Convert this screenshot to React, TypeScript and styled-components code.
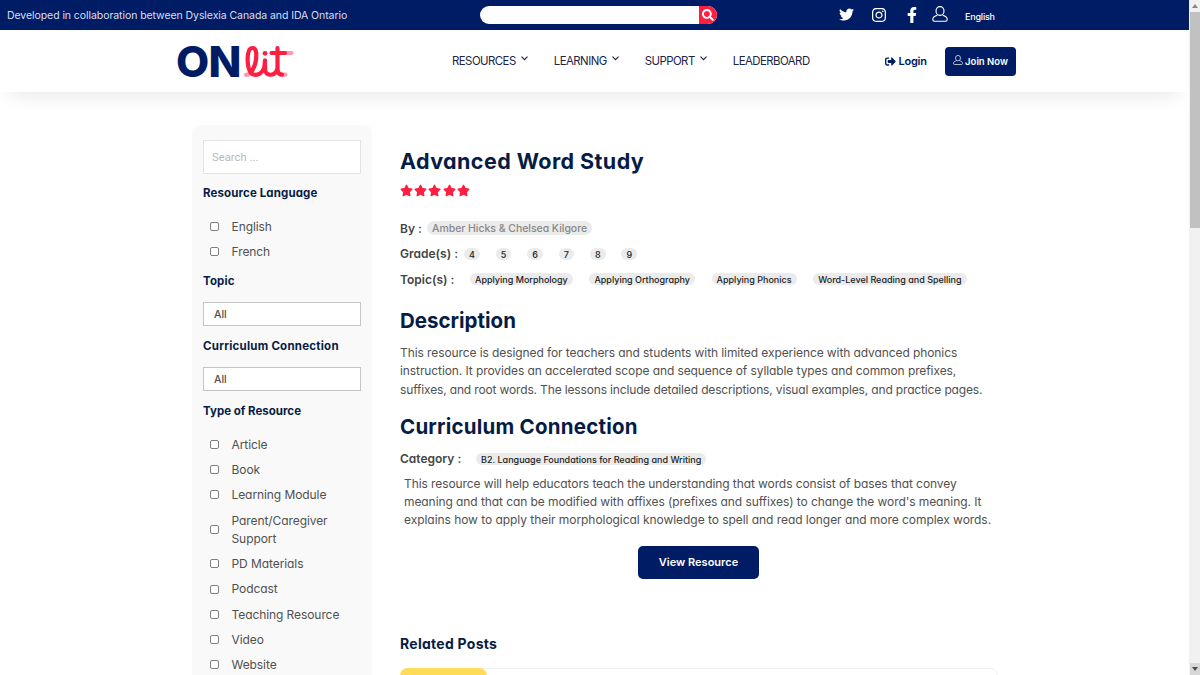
import React from 'react';
import styled, { createGlobalStyle, css } from 'styled-components';
import { FaTwitter, FaInstagram, FaFacebookF, FaSearch, FaStar, FaSignOutAlt } from 'react-icons/fa';

const navy = '#001c64';
const ink = '#061c45';
const red = '#fd1f42';

const GlobalStyle = createGlobalStyle`
  *, *::before, *::after { box-sizing: border-box; }
  html, body { margin: 0; padding: 0; }
  body {
    background: #fff;
    color: #505050;
    font-family: Inter, 'Open Sans', sans-serif;
    font-feature-settings: 'cv11' 1;
    overflow: hidden;
  }
  h1, h2, h3, p, ul { margin: 0; padding: 0; }
  ul { list-style: none; }
`;

const Frame = styled.div`
  display: flex;
  width: 1200px;
  height: 675px;
  overflow: hidden;
`;

const Page = styled.div`
  width: 1189px;
  height: 675px;
  overflow: hidden;
  display: flex;
  flex-direction: column;
`;

const TopBar = styled.div`
  flex: none;
  height: 30px;
  display: flex;
  align-items: center;
  background: ${navy};
  color: #d9dff0;
`;

const Tagline = styled.div`
  width: 480px;
  padding-left: 7px;
  font-size: 10.5px;
  letter-spacing: -0.07px;
  white-space: nowrap;
  font-feature-settings: normal;
`;

const SearchPill = styled.div`
  display: flex;
  width: 237px;
  height: 18px;
  border-radius: 9px;
  background: #fff;
  overflow: hidden;
  justify-content: flex-end;
`;

const SearchGo = styled.div`
  width: 18px;
  display: grid;
  place-items: center;
  background: ${red};
  color: #fff;
`;

const Social = styled.div`
  display: flex;
  align-items: center;
  margin-left: 122px;
  color: #fff;
  svg { display: block; }
`;

const IconSlot = styled.span<{ $gap?: number; $lift?: number }>`
  margin: ${(p) => -(p.$lift ?? 1)}px 0 0 ${(p) => p.$gap ?? 0}px;
`;

const Lang = styled.span`
  margin: 2px 0 0 17.5px;
  font-size: 9px;
  font-weight: 500;
  letter-spacing: -0.2px;
`;

const Header = styled.header`
  flex: none;
  height: 62px;
  display: flex;
  align-items: center;
  padding-left: 177px;
  background: #fff;
  box-shadow: 0 14px 18px -10px rgba(0, 0, 0, 0.09);
`;

const Logo = styled.div`
  display: flex;
  align-items: center;
  width: 275px;
  height: 36px;
  color: ${navy};
`;

const LogoOn = styled.span`
  flex: none;
  width: 66px;
  margin-left: -1px;
  font-size: 43px;
  font-weight: 800;
  line-height: 36px;
  letter-spacing: -0.7px;
`;

const Nav = styled.nav`
  display: flex;
  width: 433px;
  gap: 26px;
  color: #1c2444;
`;

const NavItem = styled.a`
  display: flex;
  align-items: center;
  gap: 5px;
  font-size: 11.4px;
  line-height: 18px;
  letter-spacing: -0.53px;
  white-space: nowrap;
  svg { margin-top: -5px; }
`;

const Login = styled.a`
  display: flex;
  align-items: center;
  gap: 2.5px;
  width: 60px;
  color: ${navy};
  font-size: 11px;
  font-weight: 600;
  letter-spacing: -0.25px;
`;

const buttonBase = css`
  display: flex;
  align-items: center;
  justify-content: center;
  background: ${navy};
  color: #fff;
  font-weight: 600;
  white-space: nowrap;
`;

const Join = styled.a`
  ${buttonBase}
  gap: 2px;
  width: 71px;
  height: 29px;
  border-radius: 4px;
  font-size: 9.5px;
  svg { margin-top: -2px; }
`;

const Columns = styled.div`
  display: flex;
  gap: 28px;
  padding: 33px 0 0 192px;
  align-items: flex-start;
`;

const Sidebar = styled.aside`
  width: 180px;
  height: 620px;
  padding: 15px 11px;
  background: #f9f9f9;
  border-radius: 8px;
`;

const SideSearch = styled.div`
  width: 158px;
  height: 34px;
  padding-left: 8px;
  border: 1px solid #e3e3e3;
  background: #fff;
  color: #b8b8b8;
  font: 11.3px/33px Roboto, sans-serif;
`;

const SideTitle = styled.h3<{ $top: number; $ls?: number }>`
  margin-top: ${(p) => p.$top}px;
  color: ${ink};
  font-size: 11.5px;
  font-weight: 650;
  line-height: 18px;
  letter-spacing: ${(p) => p.$ls ?? 0}px;
  white-space: nowrap;
`;

const Options = styled.ul<{ $top: number }>`
  display: flex;
  flex-direction: column;
  gap: 7px;
  margin-top: ${(p) => p.$top}px;
`;

const Option = styled.li`
  display: flex;
  align-items: center;
  gap: 12.5px;
  padding-left: 7px;
  font-size: 12px;
  line-height: 18.3px;
  letter-spacing: -0.08px;
`;

const OptionText = styled.span`
  padding-top: 0.6px;
  margin-bottom: -0.6px;
`;

const Box = styled.span`
  flex: none;
  width: 9px;
  height: 9px;
  border: 1px solid #808080;
  border-radius: 2px;
  background: #fff;
`;

const Select = styled.div`
  width: 158px;
  height: 24px;
  margin-top: 12px;
  padding-left: 10px;
  border: 1px solid #c4c4c4;
  background: #fff;
  font-size: 10.5px;
  font-weight: 500;
  line-height: 23px;
`;

const Main = styled.main`
  width: 600px;
  padding-top: 20px;
`;

const Title = styled.h1<{ $top?: number; $ls?: number; $size?: number }>`
  margin-top: ${(p) => p.$top ?? 0}px;
  color: ${ink};
  font-size: ${(p) => p.$size ?? 20.5}px;
  font-weight: 650;
  line-height: 32px;
  letter-spacing: ${(p) => p.$ls ?? 0}px;
  white-space: nowrap;
`;

const Stars = styled.div`
  display: flex;
  gap: 1.2px;
  height: 14px;
  margin: 7px 0 21px;
  color: ${red};
`;

const Meta = styled.div<{ $top?: number }>`
  display: flex;
  align-items: center;
  height: 18px;
  margin-top: ${(p) => p.$top ?? 0}px;
`;

const Label = styled.span<{ $w: number }>`
  flex: none;
  width: ${(p) => p.$w}px;
  color: #444;
  font-size: 12px;
  font-weight: 600;
  white-space: nowrap;
`;

const Pill = styled.span<{ $big?: boolean; $gap?: number }>`
  display: block;
  margin-right: ${(p) => p.$gap ?? 16.6}px;
  padding: 1px 5px 0;
  border-radius: 7px;
  background: #ebebeb;
  color: ${(p) => (p.$big ? '#888' : '#222')};
  font-size: ${(p) => (p.$big ? 10.5 : 9)}px;
  font-weight: 500;
  line-height: ${(p) => (p.$big ? 13 : 11)}px;
  letter-spacing: ${(p) => (p.$big ? -0.04 : 0)}px;
  white-space: nowrap;
`;

const Para = styled.p<{ $top: number; $left?: number }>`
  margin: ${(p) => p.$top}px 0 0 ${(p) => p.$left ?? 0}px;
  font-size: 12px;
  line-height: 18.3px;
  white-space: nowrap;
`;

const Line = styled.span<{ $ls: number }>`
  display: block;
  letter-spacing: ${(p) => p.$ls}px;
`;

const ViewButton = styled.a`
  ${buttonBase}
  width: 121px;
  height: 33px;
  margin: 16px 0 0 238px;
  padding-bottom: 1px;
  border-radius: 5px;
  font-size: 11px;
`;

const Related = styled.h2`
  margin-top: 53px;
  color: ${ink};
  font-size: 14px;
  font-weight: 650;
  line-height: 24px;
  letter-spacing: 0.27px;
`;

const Card = styled.div`
  width: 598px;
  height: 60px;
  margin-top: 12.5px;
  border: 1px solid #f1f1f1;
  border-radius: 8px;
`;

const CardTab = styled.div`
  width: 87px;
  height: 20px;
  margin: -1px;
  border-radius: 8px 8px 0 0;
  background: #ffdc57;
`;

const Scroll = styled.div`
  width: 11px;
  height: 675px;
  display: flex;
  flex-direction: column;
  justify-content: space-between;
  align-items: center;
  background: #f1f1f1;
`;

const Thumb = styled.div`
  width: 10px;
  height: 216px;
  background: #c1c1c1;
`;

const ScrollArrow = styled.div<{ $shade?: boolean }>`
  width: 10px;
  height: 12px;
  display: grid;
  place-items: center;
  background: ${(p) => (p.$shade ? '#d8d8d8' : 'transparent')};
`;

const ScrollTop = styled.div`
  display: flex;
  flex-direction: column;
  align-items: center;
`;

const UserIcon = ({ size }: { size: number }) => (
  <svg width={size} height={size} viewBox="0 0 16 16" fill="none" stroke="currentColor" strokeWidth="1.1">
    <ellipse cx="8" cy="5" rx="4" ry="4.4" />
    <path d="M5.4 9.2C2.6 10 .8 11.4.8 13.2c0 1.3.5 2 1.6 2h11.2c1.1 0 1.6-.7 1.6-2 0-1.8-1.8-3.2-4.6-4" />
  </svg>
);

const Chevron = () => (
  <svg width="7" height="5" viewBox="0 0 7 5" fill="none" stroke="currentColor" strokeWidth="1.1">
    <path d="M.5.7l3 3 3-3" />
  </svg>
);

const Script = () => (
  <svg width="54" height="36" viewBox="0 0 54 36" fill="none" stroke={red} strokeWidth="4.2" strokeLinecap="round" strokeLinejoin="round">
    <path opacity=".45" d="M4 31.800c3 0 5-1.500 6.500-4" />
    <path opacity=".45" d="M38 31.600h5.500M40 10h9.500" />
    <path d="M8.500 29.500C12.500 25 14.600 17 14.200 10 13.800 3.200 7.300 3.200 6 11 4.800 20 6.500 31.800 13 31.800c6.500 0 10-6 10-14.300" />
    <path d="M23 17.500V26c0 7.500 9.500 7.500 12 1" />
    <path d="M35.500 5v20.500c0 4 1.500 6 4.500 6.200M29.500 10H43" />
    <circle cx="23" cy="10.300" r="2.400" fill={red} stroke="none" />
  </svg>
);

const grades = ['4', '5', '6', '7', '8', '9'];
const stars = [1, 2, 3, 4, 5];
const topics = ['Applying Morphology', 'Applying Orthography', 'Applying Phonics', 'Word-Level Reading and Spelling'];
const types = ['Article', 'Book', 'Learning Module', 'Parent/Caregiver Support', 'PD Materials', 'Podcast', 'Teaching Resource', 'Video', 'Website'];

const OptionList = ({ items, top }: { items: string[]; top: number }) => (
  <Options $top={top}>
    {items.map((t) => (
      <Option key={t}><Box /><OptionText>{t}</OptionText></Option>
    ))}
  </Options>
);

export default function App() {
  return (
    <Frame>
      <GlobalStyle />
      <Page>
        <TopBar>
          <Tagline>Developed in collaboration between Dyslexia Canada and IDA Ontario</Tagline>
          <SearchPill><SearchGo><FaSearch size={12} /></SearchGo></SearchPill>
          <Social>
            <IconSlot><FaTwitter size={15} /></IconSlot>
            <IconSlot $gap={17}><FaInstagram size={16} /></IconSlot>
            <IconSlot $gap={17}><FaFacebookF size={16} /></IconSlot>
            <IconSlot $gap={11.5} $lift={3}><UserIcon size={16} /></IconSlot>
            <Lang>English</Lang>
          </Social>
        </TopBar>
        <Header>
          <Logo><LogoOn>ON</LogoOn><Script /></Logo>
          <Nav>
            <NavItem>RESOURCES <Chevron /></NavItem>
            <NavItem>LEARNING <Chevron /></NavItem>
            <NavItem>SUPPORT <Chevron /></NavItem>
            <NavItem>LEADERBOARD</NavItem>
          </Nav>
          <Login><FaSignOutAlt size={11} />Login</Login>
          <Join><UserIcon size={10} />Join Now</Join>
        </Header>
        <Columns>
          <Sidebar>
            <SideSearch>Search ...</SideSearch>
            <SideTitle $top={10} $ls={0.12}>Resource Language</SideTitle>
            <OptionList top={15.5} items={['English', 'French']} />
            <SideTitle $top={11} $ls={0.12}>Topic</SideTitle>
            <Select>All</Select>
            <SideTitle $top={10.5} $ls={0.24}>Curriculum Connection</SideTitle>
            <Select>All</Select>
            <SideTitle $top={11}>Type of Resource</SideTitle>
            <OptionList top={15.5} items={types} />
          </Sidebar>
          <Main>
            <Title $size={21.5} $ls={0.42}>Advanced Word Study</Title>
            <Stars>{stars.map((n) => <FaStar key={n} size={13} />)}</Stars>
            <Meta><Label $w={27}>By :</Label><Pill $big>Amber Hicks &amp; Chelsea Kilgore</Pill></Meta>
            <Meta $top={7.5}><Label $w={64}>Grade(s) :</Label>{grades.map((g) => <Pill key={g} $gap={15.9}>{g}</Pill>)}</Meta>
            <Meta $top={7.5}><Label $w={70}>Topic(s) :</Label>{topics.map((t) => <Pill key={t}>{t}</Pill>)}</Meta>
            <Title as="h2" $top={17}>Description</Title>
            <Para $top={7}>
              <Line $ls={-0.09}>This resource is designed for teachers and students with limited experience with advanced phonics</Line>
              <Line $ls={-0.09}>instruction. It provides an accelerated scope and sequence of syllable types and common prefixes,</Line>
              <Line $ls={-0.15}>suffixes, and root words. The lessons include detailed descriptions, visual examples, and practice pages.</Line>
            </Para>
            <Title as="h2" $top={12} $ls={0.22}>Curriculum Connection</Title>
            <Meta $top={7}><Label $w={76}>Category :</Label><Pill>B2. Language Foundations for Reading and Writing</Pill></Meta>
            <Para $top={7} $left={4}>
              <Line $ls={-0.09}>This resource will help educators teach the understanding that words consist of bases that convey</Line>
              <Line $ls={-0.08}>meaning and that can be modified with affixes (prefixes and suffixes) to change the word's meaning. It</Line>
              <Line $ls={-0.05}>explains how to apply their morphological knowledge to spell and read longer and more complex words.</Line>
            </Para>
            <ViewButton>View Resource</ViewButton>
            <Related>Related Posts</Related>
            <Card><CardTab /></Card>
          </Main>
        </Columns>
      </Page>
      <Scroll>
        <ScrollTop>
          <ScrollArrow><svg width="6" height="4"><path d="M0 4l3-4 3 4z" fill="#888" /></svg></ScrollArrow>
          <Thumb />
        </ScrollTop>
        <ScrollArrow $shade><svg width="6" height="4"><path d="M0 0l3 4 3-4z" fill="#505050" /></svg></ScrollArrow>
      </Scroll>
    </Frame>
  );
}
